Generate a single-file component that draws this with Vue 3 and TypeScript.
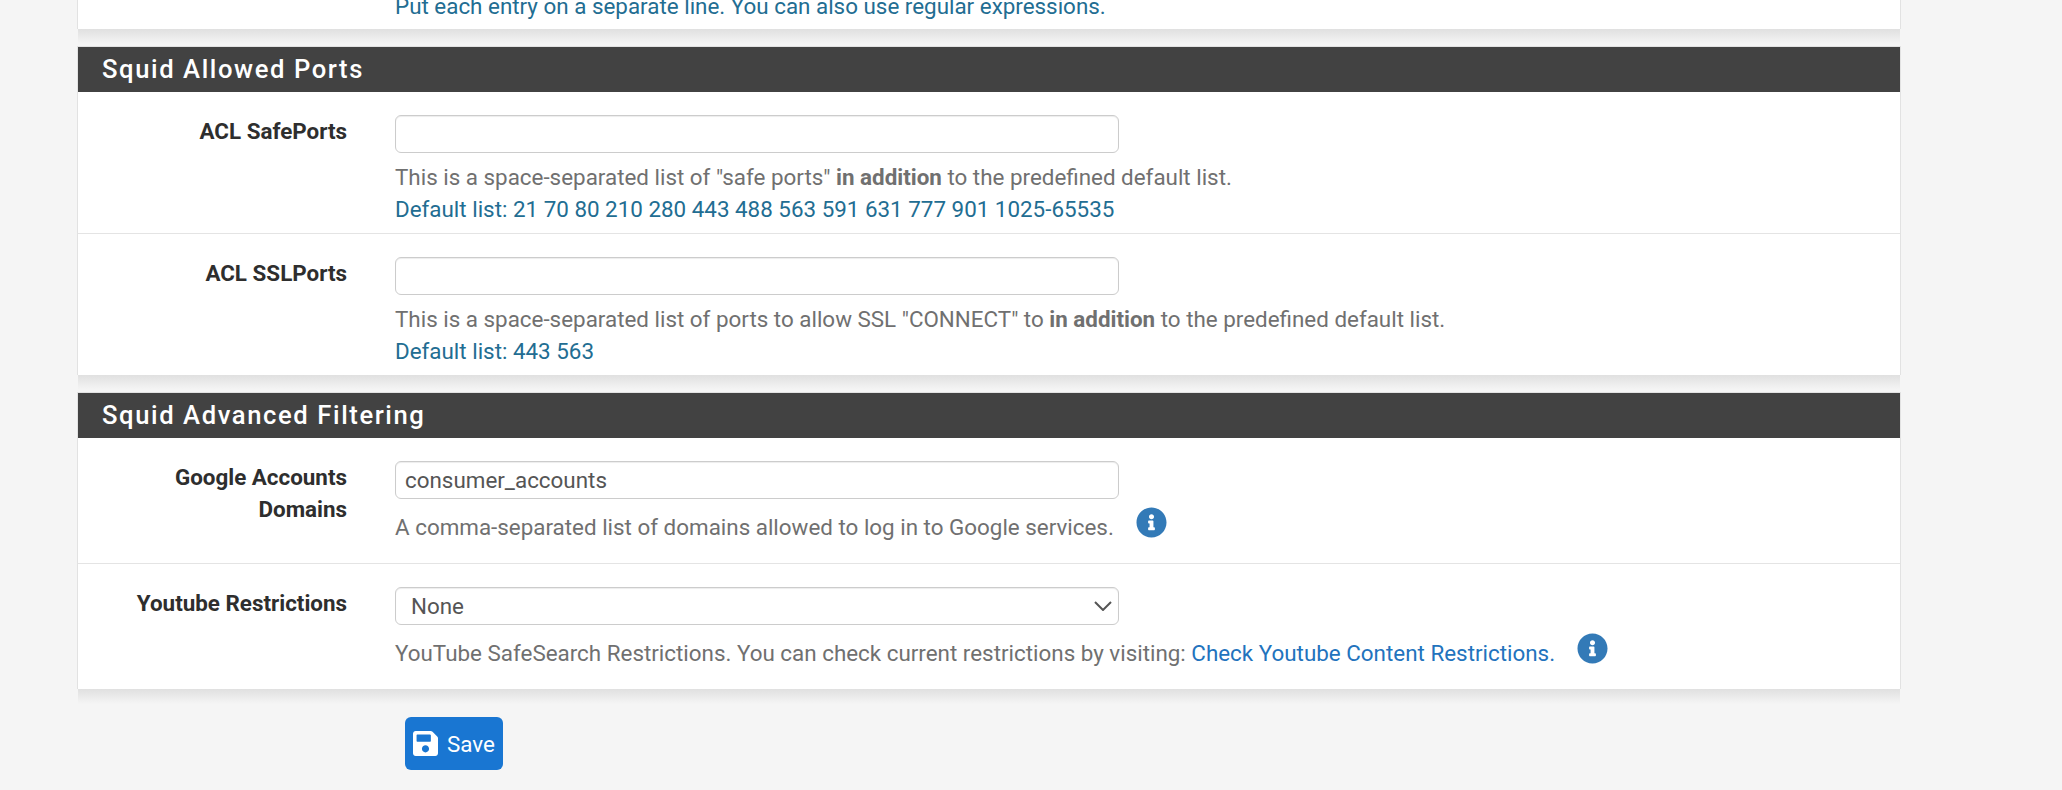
<script setup lang="ts">
const savePath = 'M433.941 129.941l-83.882-83.882A48 48 0 0 0 316.118 32H48C21.49 32 0 53.49 0 80v352c0 26.51 21.49 48 48 48h352c26.51 0 48-21.49 48-48V163.882a48 48 0 0 0-14.059-33.941zM224 416c-35.346 0-64-28.654-64-64 0-35.346 28.654-64 64-64s64 28.654 64 64c0 35.346-28.654 64-64 64zm96-304.52V212c0 6.627-5.373 12-12 12H76c-6.627 0-12-5.373-12-12V108c0-6.627 5.373-12 12-12h228.52c3.183 0 6.235 1.264 8.485 3.515l3.48 3.48A11.996 11.996 0 0 1 320 111.48z'
const infoPath = 'M256 8C119.043 8 8 119.083 8 256c0 136.997 111.043 248 248 248s248-111.003 248-248C504 119.083 392.957 8 256 8zm0 110c23.196 0 42 18.804 42 42s-18.804 42-42 42-42-18.804-42-42 18.804-42 42-42zm56 254c0 6.627-5.373 12-12 12h-88c-6.627 0-12-5.373-12-12v-24c0-6.627 5.373-12 12-12h12v-64h-12c-6.627 0-12-5.373-12-12v-24c0-6.627 5.373-12 12-12h64c6.627 0 12 5.373 12 12v100h12c6.627 0 12 5.373 12 12v24z'
</script>

<template>
  <div class="page">
    <section class="panel cut">
      <div class="cut-inner">
        <div class="cut-text info">Put each entry on a separate line. You can also use regular expressions.</div>
      </div>
    </section>

    <section class="panel">
      <h2 class="heading">Squid Allowed Ports</h2>
      <div class="row">
        <label class="label">ACL SafePorts</label>
        <div class="field">
          <input class="control" type="text" />
          <div class="help">This is a space-separated list of "safe ports" <b>in addition</b> to the predefined default list.</div>
          <div class="info">Default list: 21 70 80 210 280 443 488 563 591 631 777 901 1025-65535</div>
        </div>
      </div>
      <div class="row">
        <label class="label">ACL SSLPorts</label>
        <div class="field">
          <input class="control" type="text" />
          <div class="help">This is a space-separated list of ports to allow SSL "CONNECT" to <b>in addition</b> to the predefined default list.</div>
          <div class="info">Default list: 443 563</div>
        </div>
      </div>
    </section>

    <section class="panel">
      <h2 class="heading">Squid Advanced Filtering</h2>
      <div class="row tall">
        <label class="label">Google Accounts Domains</label>
        <div class="field">
          <input class="control" type="text" value="consumer_accounts" />
          <div class="help with-icon">
            <span>A comma-separated list of domains allowed to log in to Google services.</span>
            <svg class="info-icon" viewBox="0 0 512 512"><path :d="infoPath" /></svg>
          </div>
        </div>
      </div>
      <div class="row tall">
        <label class="label">Youtube Restrictions</label>
        <div class="field">
          <div class="select-wrap">
            <select class="control select"><option>None</option></select>
            <svg class="chevron" viewBox="0 0 18 10"><path d="M1 1l8 8 8-8" /></svg>
          </div>
          <div class="help with-icon">
            <span>YouTube SafeSearch Restrictions. You can check current restrictions by visiting: <a class="link" href="#">Check Youtube Content Restrictions.</a></span>
            <svg class="info-icon" viewBox="0 0 512 512"><path :d="infoPath" /></svg>
          </div>
        </div>
      </div>
    </section>

    <button class="save" type="button">
      <svg class="save-icon" viewBox="0 0 448 512"><path :d="savePath" /></svg>
      <span>Save</span>
    </button>
  </div>
</template>

<style scoped>
.page {
  width: 1824px;
  margin-left: 77px;
  font-family: Roboto, "Liberation Sans", sans-serif;
  font-size: 22.4px;
  line-height: 32px;
  color: #707070;
}
.panel {
  position: relative;
  background: #fff;
  margin-bottom: 17px;
  border: 1px solid #e2e2e2;
  border-bottom: 0;
}
.panel::after {
  content: "";
  position: absolute;
  left: 0;
  right: 0;
  top: 100%;
  height: 15px;
  background: linear-gradient(#e0e0e0, #f5f5f5);
}
.cut {
  border-top: 0;
}
.cut-inner {
  height: 29px;
  overflow: hidden;
  display: flex;
  align-items: flex-end;
  padding-left: 317px;
}
.cut-text {
  flex: none;
  height: 32px;
  margin-bottom: 7px;
}
.heading {
  margin: 0;
  height: 45px;
  padding-left: 24px;
  background: #424242;
  color: #fff;
  font-size: 25.6px;
  font-weight: 500;
  line-height: 45px;
  letter-spacing: 1.6px;
}
.row {
  display: flex;
  padding: 23px 0 8px;
  border-bottom: 1px solid #e4e4e4;
}
.row:last-child {
  border-bottom: 0;
}
.row.tall {
  padding-bottom: 20px;
}
.label {
  flex: none;
  width: 250px;
  margin: 0 48px 0 19px;
  text-align: right;
  color: #2e2e2e;
  font-weight: 700;
}
.field {
  flex: 1;
  min-width: 0;
}
.control {
  display: block;
  box-sizing: border-box;
  width: 724px;
  height: 38px;
  padding: 0 9px;
  border: 1px solid #ccc;
  border-radius: 6px;
  background: #fff;
  box-shadow: inset 0 1px 1px rgba(0, 0, 0, 0.075);
  font: inherit;
  line-height: 36px;
  color: #555;
  outline: none;
}
.select-wrap {
  position: relative;
  width: 724px;
}
.select {
  appearance: none;
  padding-left: 15px;
}
.chevron {
  position: absolute;
  right: 7px;
  top: 14px;
  width: 18px;
  height: 10px;
  fill: none;
  stroke: #555;
  stroke-width: 2;
}
.help {
  margin-top: 8px;
}
.help b {
  font-weight: 700;
}
.info {
  color: #226d92;
}
.help.with-icon {
  display: flex;
  align-items: flex-start;
  gap: 22px;
  margin-top: 12px;
}
.info-icon {
  flex: none;
  width: 31px;
  height: 31px;
  margin-top: -4px;
  fill: #337ab7;
}
.link {
  color: #2273bd;
  text-decoration: none;
}
.save {
  position: relative;
  display: flex;
  align-items: center;
  gap: 9px;
  box-sizing: border-box;
  width: 98px;
  height: 53px;
  margin: 28px 0 0 328px;
  padding: 0 0 0 8px;
  border: 0;
  border-radius: 6px;
  background: #1976d2;
  color: #fff;
  font: inherit;
}
.save-icon {
  flex: none;
  width: 25px;
  height: 29px;
  fill: #fff;
}
</style>

<style>
body {
  background: #f5f5f5;
  overflow: hidden;
}
</style>
